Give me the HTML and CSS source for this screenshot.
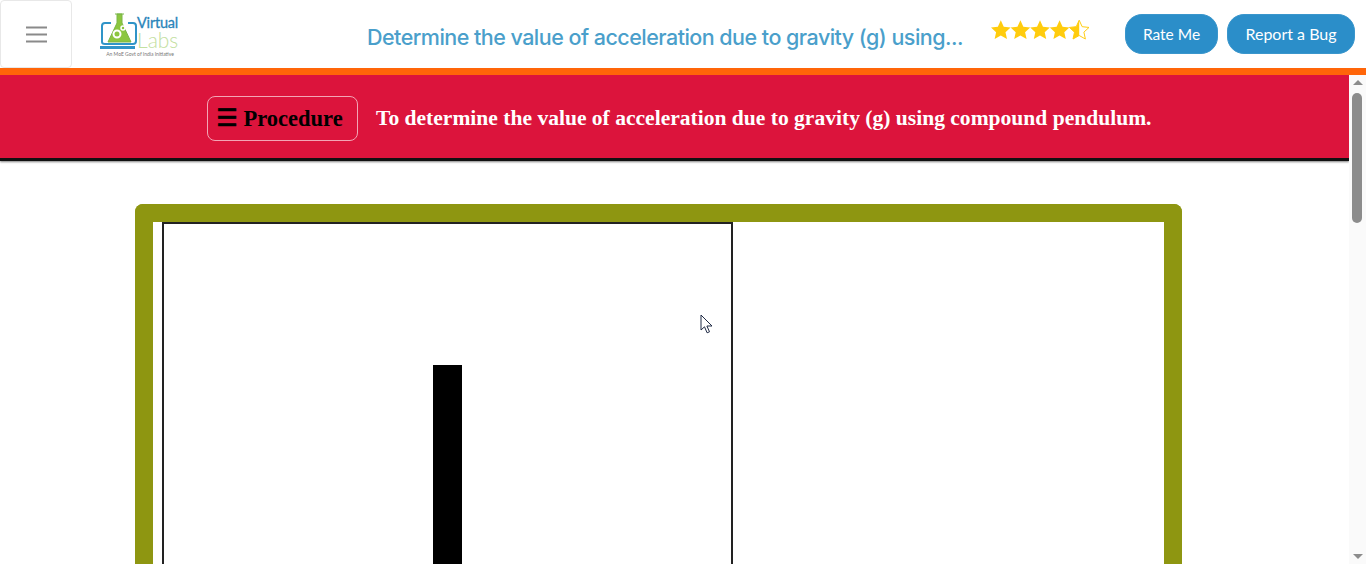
FILE: index.html
```html
<!DOCTYPE html>
<html lang="en">
<head>
<meta charset="utf-8">
<title>Virtual Labs</title>
<link rel="stylesheet" href="styles.css">
</head>
<body>
<header class="topbar">
  <button class="menu-btn" aria-label="Menu">
    <svg width="21" height="17" viewBox="0 0 21 17"><path d="M0 1.5h21M0 8.5h21M0 15.5h21" stroke="#8a8a8a" stroke-width="2"/></svg>
  </button>
  <div class="logo">
    <svg class="logo-art" width="38" height="40" viewBox="0 0 38 40">
      <path d="M11 10H5q-3 0-3 3v16q0 2 3 2h28q3 0 3-3V13q0-3-3-3h-5" fill="none" stroke="#2f94c8" stroke-width="2"/>
      <path d="M15 1h9M17 1v9L8 29h23L22 10V1z" fill="#8cc63f" stroke="#7ab648"/>
      <circle cx="17" cy="21" r="3.5" fill="none" stroke="#fff" stroke-width="2"/>
      <circle cx="23" cy="15" r="2" fill="none" stroke="#fff" stroke-width="1.5"/>
      <rect x="0" y="33" width="35" height="3" fill="#2f94c8"/>
    </svg>
    <div class="logo-words">
      <span class="logo-virtual">Virtual</span>
      <span class="logo-labs">Labs</span>
    </div>
    <div class="logo-tag">An MoE Govt of India Initiative</div>
  </div>
  <h1 class="title">Determine the value of acceleration due to gravity (g) using...</h1>
  <div class="stars" aria-label="4.5 stars">
    <svg width="98" height="20" viewBox="0 0 100 20">
      <defs>
        <path id="star" d="M10 0l3 6.6 7 .8-5.2 4.8 1.5 7L10 15.6l-6.3 3.6 1.5-7L0 7.4l7-.8z"/>
        <clipPath id="half"><rect x="0" y="0" width="10" height="20"/></clipPath>
      </defs>
      <use href="#star" fill="#ffcc0d"/>
      <use href="#star" x="20" fill="#ffcc0d"/>
      <use href="#star" x="40" fill="#ffcc0d"/>
      <use href="#star" x="60" fill="#ffcc0d"/>
      <use href="#star" x="80" fill="#fff" stroke="#ffcc0d" stroke-width="1"/>
      <g transform="translate(80 0)"><use href="#star" fill="#ffcc0d" clip-path="url(#half)"/></g>
    </svg>
  </div>
  <div class="actions">
    <button class="pill pill-rate">Rate Me</button>
    <button class="pill pill-bug">Report a Bug</button>
  </div>
</header>
<div class="accent"></div>
<div class="page">
  <div class="content">
    <section class="banner">
      <button class="proc-btn"><span class="proc-icon">☰</span> Procedure</button>
      <h2 class="aim">To determine the value of acceleration due to gravity (g) using compound pendulum.</h2>
    </section>
    <main class="stage">
      <div class="frame">
        <div class="canvas">
          <div class="rod"></div>
          <svg class="cursor" width="14" height="20" viewBox="0 0 14 20"><path d="M1 1v15l3.5-3.2 2.6 6 2.4-1-2.6-5.8H12z" fill="#fff" stroke="#1f2a44" stroke-width="1"/></svg>
        </div>
      </div>
    </main>
  </div>
  <aside class="scrollbar">
    <span class="arrow arrow-up"></span>
    <span class="track"><span class="thumb"></span></span>
    <span class="arrow arrow-down"></span>
  </aside>
</div>
</body>
</html>
```
FILE: styles.css
```css
* { box-sizing: border-box; }
html, body { margin: 0; height: 564px; overflow: hidden; background: #fff; }
body { display: flex; flex-direction: column; font-family: "Lato", "Liberation Sans", sans-serif; }
button { font: inherit; cursor: pointer; }

.topbar { height: 68px; display: flex; align-items: center; flex: none; }
.menu-btn {
  width: 72px; height: 68px; padding: 0; background: #fff;
  border: 1px solid #e8e8e8; border-radius: 4px;
  display: flex; align-items: center; justify-content: center; flex: none;
}
.logo { width: 80px; height: 44px; margin-left: 28px; flex: none; display: grid; grid-template-columns: 37px 43px; grid-template-rows: 38px 6px; position: relative; top: 1px; }
.logo-art { width: 38px; height: 40px; }
.logo-words { display: flex; flex-direction: column; padding-top: 2px; }
.logo-virtual { font-size: 14.5px; line-height: 15px; font-weight: 400; color: #2a85ba; letter-spacing: -0.2px; -webkit-text-stroke: 0.3px #2a85ba; }
.logo-labs { font-size: 21px; line-height: 19px; font-weight: 300; color: #c3e0a0; }
.logo-tag { grid-column: 1 / 3; font-size: 5px; line-height: 6px; color: #777; text-align: center; white-space: nowrap; }

.title { margin: 5px 0 0 187px; width: 597px; flex: none; font-family: "Inter", "Lato", sans-serif; font-size: 21.5px; font-weight: 500; color: #4a9fcb; white-space: nowrap; letter-spacing: -0.53px; }
.stars { margin-left: 27px; width: 98px; height: 20px; flex: none; position: relative; top: -4px; }
.actions { margin-left: 36px; display: flex; gap: 9px; align-items: center; }
.pill { height: 40px; border: 1px solid #3a96cc; border-radius: 17px; background: #2b8ec9; color: #fff; font-size: 15.5px; padding: 0; }
.pill-rate { width: 93px; }
.pill-bug { width: 128px; font-size: 16px; padding-bottom: 2px; }

.accent { height: 7px; background: #ff6509; flex: none; }
.page { flex: 1; display: flex; min-height: 0; }
.content { flex: 1; min-width: 0; overflow: hidden; }

.banner {
  height: 86px; background: #dc143c; border-bottom: 3px solid #111; box-shadow: 0 1px 2px rgba(0,0,0,.5);
  display: flex; align-items: center; padding: 4px 0 0 207px; gap: 18px;
}
.proc-btn {
  width: 151px; height: 45px; padding: 0 6px 2px 0; background: transparent;
  border: 1px solid #f3a5b5; border-radius: 8px; color: #000;
  font-family: "Liberation Serif", serif; font-weight: 700; font-size: 22.5px;
  white-space: nowrap;
}
.proc-icon { font-family: "DejaVu Sans", sans-serif; font-size: 24px; font-weight: 700; -webkit-text-stroke: 0.6px #000; }
.aim { margin: 0; font-family: "Liberation Serif", serif; font-weight: 700; font-size: 21.55px; color: #fff; white-space: nowrap; }

.stage { padding: 43px 0 0 135px; }
.frame {
  width: 1047px; height: 500px; background: #fff;
  border: 18px solid #8e9611; border-bottom-width: 0; border-radius: 8px 8px 0 0;
  padding-left: 9px;
}
.canvas { width: 571px; height: 500px; border: 2px solid #222; border-bottom: 0; position: relative; }
.rod { position: absolute; left: 269px; top: 141px; width: 29px; height: 300px; background: #000; }
.cursor { position: absolute; left: 536px; top: 90px; }

.scrollbar { width: 17px; flex: none; background: #fafafa; display: flex; flex-direction: column; align-items: center; }
.arrow { width: 0; height: 0; border-left: 5px solid transparent; border-right: 5px solid transparent; flex: none; }
.arrow-up { margin-top: 5px; border-bottom: 5px solid #8c8c8c; }
.arrow-down { margin-bottom: 5px; border-top: 5px solid #8c8c8c; }
.track { flex: 1; width: 100%; padding: 8px 3px 0; }
.thumb { display: block; width: 10px; height: 130px; background: #8c8c8c; border-radius: 5px; }
```
